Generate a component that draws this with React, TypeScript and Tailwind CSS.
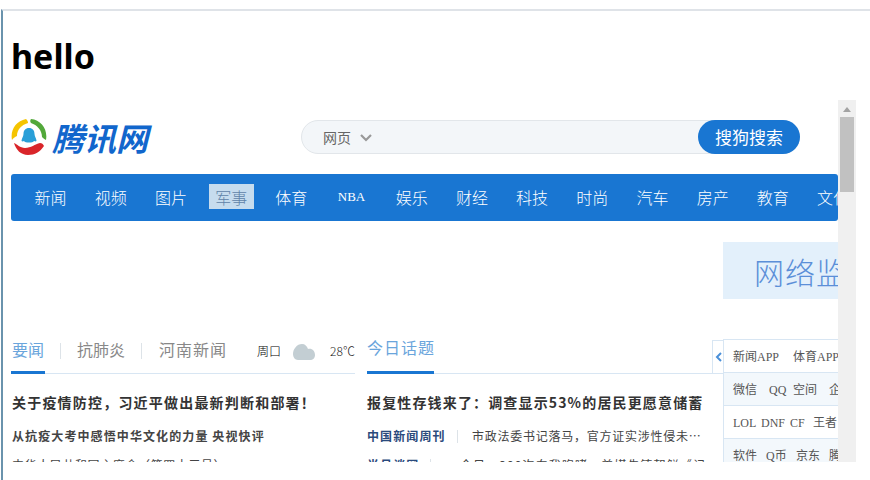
const cjk = "font-['Noto_Sans_CJK_SC','Noto_Sans',sans-serif]";

const navItems = ['新闻', '视频', '图片', '军事', '体育', 'NBA', '娱乐', '财经', '科技', '时尚', '汽车', '房产', '教育', '文化'];

const serviceRows = [
  { bg: 'bg-white', items: [['新闻APP', 'w-[60px]'], ['体育APP', 'w-[60px]']] },
  { bg: 'bg-[#f3f8fc]', items: [['微信', 'w-[36px]'], ['QQ', 'w-[24px]'], ['空间', 'w-[36px]'], ['企鹅', 'w-[30px]']] },
  { bg: 'bg-white', items: [['LOL', 'w-[28px]'], ['DNF', 'w-[29px]'], ['CF', 'w-[23px]'], ['王者', 'w-[30px]']] },
  { bg: 'bg-[#f3f8fc]', items: [['软件', 'w-[33px]'], ['Q币', 'w-[30px]'], ['京东', 'w-[33px]'], ['腾讯', 'w-[30px]']] },
];

function Logo() {
  return (
    <svg width="36" height="36" viewBox="0 0 36 36" className="shrink-0">
      <path d="M1 21 C-1 11 5 2 15 0 C17 2 17 3 17 4 C10 6 6 11 6 17 C4 18 2 19 1 21 Z" fill="#f5c400" />
      <path d="M20 0 C30 1 37 10 35 21 C33 20 32 19 31 18 C31 11 26 6 20 4 C19 3 19 1 20 0 Z" fill="#52a83a" />
      <path d="M3 24 C6 25 9 29 14 29 C20 29 24 25 29 24 C31 24 32 25 33 27 C29 33 24 36 17 36 C10 36 5 31 3 24 Z" fill="#d9252a" />
      <path d="M18 9 C21.500 9 23.500 11.500 23.500 15 C23.500 17 25.500 20 25.500 22 C24.500 23 23 22 23 22 C22 24 14 24 13 22 C13 22 11.500 23 10.500 22 C10.500 20 12.500 17 12.500 15 C12.500 11.500 14.500 9 18 9 Z" fill="#2a9fd8" />
    </svg>
  );
}

function Cloud() {
  return (
    <svg width="22" height="16" viewBox="0 0 22 16" className="shrink-0">
      <path d="M5 16 C2 16 0 13 0 10 C0 5 4 0 9 0 C12 0 14 2 15 5 C19 4 22 7 22 11 C22 14 20 16 17 16 Z" fill="#c3ced3" />
    </svg>
  );
}

function TabLine({ children }: { children: React.ReactNode }) {
  return <div className="relative flex h-[34px] items-start border-b border-[#d8e6f3]">{children}</div>;
}

export default function App() {
  return (
    <div className={`h-[480px] w-[870px] overflow-hidden bg-white pt-[9px] ${cjk}`}>
      <div className="ml-px h-[471px] border-l-2 border-t-2 border-l-[#6a93ad] border-t-[#dfe3e8]">
        <h1 className="ml-[8px] mt-[25px] h-[64px] text-[34px] font-bold leading-[40px] text-black font-['Noto_Sans',sans-serif]">hello</h1>

        <div className="flex h-[362px] w-[853px] overflow-hidden">
          <div className="w-[835px] shrink-0 overflow-hidden pl-[8px] pt-[19px]">
            {/* logo + search */}
            <div className="flex h-[36px] items-center">
              <Logo />
              <span className="ml-[5px] w-[100px] whitespace-nowrap text-[32px] font-bold italic leading-[36px] text-[#1166cc]">腾讯网</span>
              <div className="ml-[149px] flex h-[34px] w-[499px] items-center rounded-full border border-[#e2e6ea] bg-[#f3f6f9]">
                <span className="ml-[21px] text-[14px] text-[#666]">网页</span>
                <svg width="12" height="8" viewBox="0 0 12 8" className="ml-[9px] mt-[2px]">
                  <path d="M1 1 L6 6 L11 1" fill="none" stroke="#999" strokeWidth="2.2" />
                </svg>
                <span className="ml-auto -mr-px flex h-[34px] w-[102px] items-center justify-center rounded-full bg-[#1976d2] text-[17px] text-white">搜狗搜索</span>
              </div>
            </div>

            {/* nav */}
            <div className="mt-[19px] flex h-[47px] w-[827px] items-center overflow-hidden rounded-[3px] bg-[#1976d2] pb-[2px] pl-[9.5px]">
              {navItems.map((item) => (
                <div key={item} className="flex h-[25px] w-[60.2px] shrink-0 items-center justify-center whitespace-nowrap text-[16px] font-light text-white">
                  {item === '军事' ? (
                    <span className="flex h-[25px] w-[45px] items-center justify-center bg-[#c6dcee] text-[#5f83a8]">{item}</span>
                  ) : item === 'NBA' ? (
                    <span className="text-[13px] font-normal font-['Liberation_Serif',serif]">{item}</span>
                  ) : (
                    item
                  )}
                </div>
              ))}
            </div>

            {/* banner */}
            <div className="ml-[712px] mt-[21px] flex h-[57px] w-[115px] items-center overflow-hidden bg-[#e3f0fb] pl-[31px]">
              <span className="whitespace-nowrap text-[30px] font-light leading-none tracking-[1px] text-[#5b8fd8]">网络监督</span>
            </div>

            {/* columns */}
            <div className="mt-[41px] flex">
              <div className="w-[344px] shrink-0">
                <TabLine>
                  <span className="h-[34px] w-[34px] border-b-[3px] border-[#1976d2] pl-px text-[16px] leading-[18px] text-[#6aa5dc]">要闻</span>
                  <span className="ml-[15px] mt-[3px] h-[16px] w-px bg-[#dde3e8]" />
                  <span className="ml-[16px] text-[16px] leading-[18px] text-[#888]">抗肺炎</span>
                  <span className="ml-[16px] mt-[3px] h-[16px] w-px bg-[#dde3e8]" />
                  <span className="ml-[17px] text-[16px] leading-[18px] tracking-[1px] text-[#888]">河南新闻</span>
                  <span className="ml-[30px] text-[12px] font-light leading-[22px] text-black">周口</span>
                  <span className="ml-[12px] mt-[4px]"><Cloud /></span>
                  <span className="ml-[15px] whitespace-nowrap text-[12px] font-light leading-[22px] text-[#222]">28℃</span>
                </TabLine>
                <p className="ml-px mt-[17px] whitespace-nowrap text-[14px] font-bold leading-[22px] tracking-[1.2px] text-[#333]">{'关于疫情防控\uFF0C习近平做出最新判断和部署\uFF01'}</p>
                <p className="ml-px mt-[12px] whitespace-nowrap text-[12px] font-bold leading-[22px] tracking-[1.1px] text-[#444]">从抗疫大考中感悟中华文化的力量 央视快评</p>
                <p className="ml-px mt-[7px] whitespace-nowrap text-[12px] leading-[22px] tracking-[0.6px] text-[#444]">{'中华人民共和国主席令\uFF08第四十三号\uFF09'}</p>
              </div>

              <div className="ml-[12px] w-[345px] shrink-0">
                <TabLine>
                  <span className="h-[34px] w-[67px] whitespace-nowrap border-b-[3px] border-[#1976d2] text-[16px] leading-[15px] tracking-[1px] text-[#6aa5dc]">今日话题</span>
                </TabLine>
                <p className="mt-[17px] whitespace-nowrap text-[14px] font-bold leading-[22px] tracking-[1.15px] text-[#333]">{'报复性存钱来了\uFF1A调查显示53%的居民更愿意储蓄'}</p>
                <div className="mt-[12px] flex h-[22px] items-center whitespace-nowrap text-[12px] tracking-[1.1px] text-[#444]">
                  <span className="w-[80px] font-bold text-[#2a4a7c]">中国新闻周刊</span>
                  <span className="ml-[10px] h-[13px] w-px bg-[#dde3e8]" />
                  <span className="ml-[14px] w-[232px] overflow-hidden text-ellipsis tracking-[0.75px]">{'市政法委书记落马\uFF0C官方证实涉性侵未成年人'}</span>
                </div>
                <div className="mt-[7px] flex h-[22px] items-center whitespace-nowrap text-[12px] tracking-[1.1px] text-[#444]">
                  <span className="w-[53px] font-bold text-[#2a4a7c]">半月谈网</span>
                  <span className="ml-[10px] h-[13px] w-px bg-[#dde3e8]" />
                  <span className="ml-[29px]">{'今日\uFF0C300次向我咆哮\uFF0C美媒先铸朝鲜《记'}</span>
                </div>
              </div>

              <div className="flex h-[34px] w-[11px] shrink-0 items-center justify-center border-y border-l border-[#d8e6f3]">
                <svg width="7" height="10" viewBox="0 0 7 10">
                  <path d="M6 1 L2 5 L6 9" fill="none" stroke="#4a90d9" strokeWidth="2" />
                </svg>
              </div>

              <div className="-mt-px w-[115px] shrink-0 overflow-hidden border-l border-[#d8e6f3] font-['Liberation_Serif','Noto_Sans_CJK_SC',serif]">
                {serviceRows.map((row, i) => (
                  <div key={i} className={`flex h-[33px] items-center whitespace-nowrap border-t border-[#d8e6f3] pl-[9px] pt-[2px] text-[12px] text-[#555] ${row.bg}`}>
                    {row.items.map(([label, width]) => (
                      <span key={label} className={`shrink-0 ${width}`}>{label}</span>
                    ))}
                  </div>
                ))}
              </div>
            </div>
          </div>

          {/* scrollbar */}
          <div className="flex h-[362px] w-[18px] shrink-0 flex-col items-center bg-[#f0f0f0]">
            <svg width="8" height="5" viewBox="0 0 8 5" className="mt-[7px]">
              <path d="M4 0 L8 5 L0 5 Z" fill="#a3a3a3" />
            </svg>
            <div className="mt-[5px] h-[75px] w-[14px] bg-[#c1c1c1]" />
          </div>
        </div>
      </div>
    </div>
  );
}
